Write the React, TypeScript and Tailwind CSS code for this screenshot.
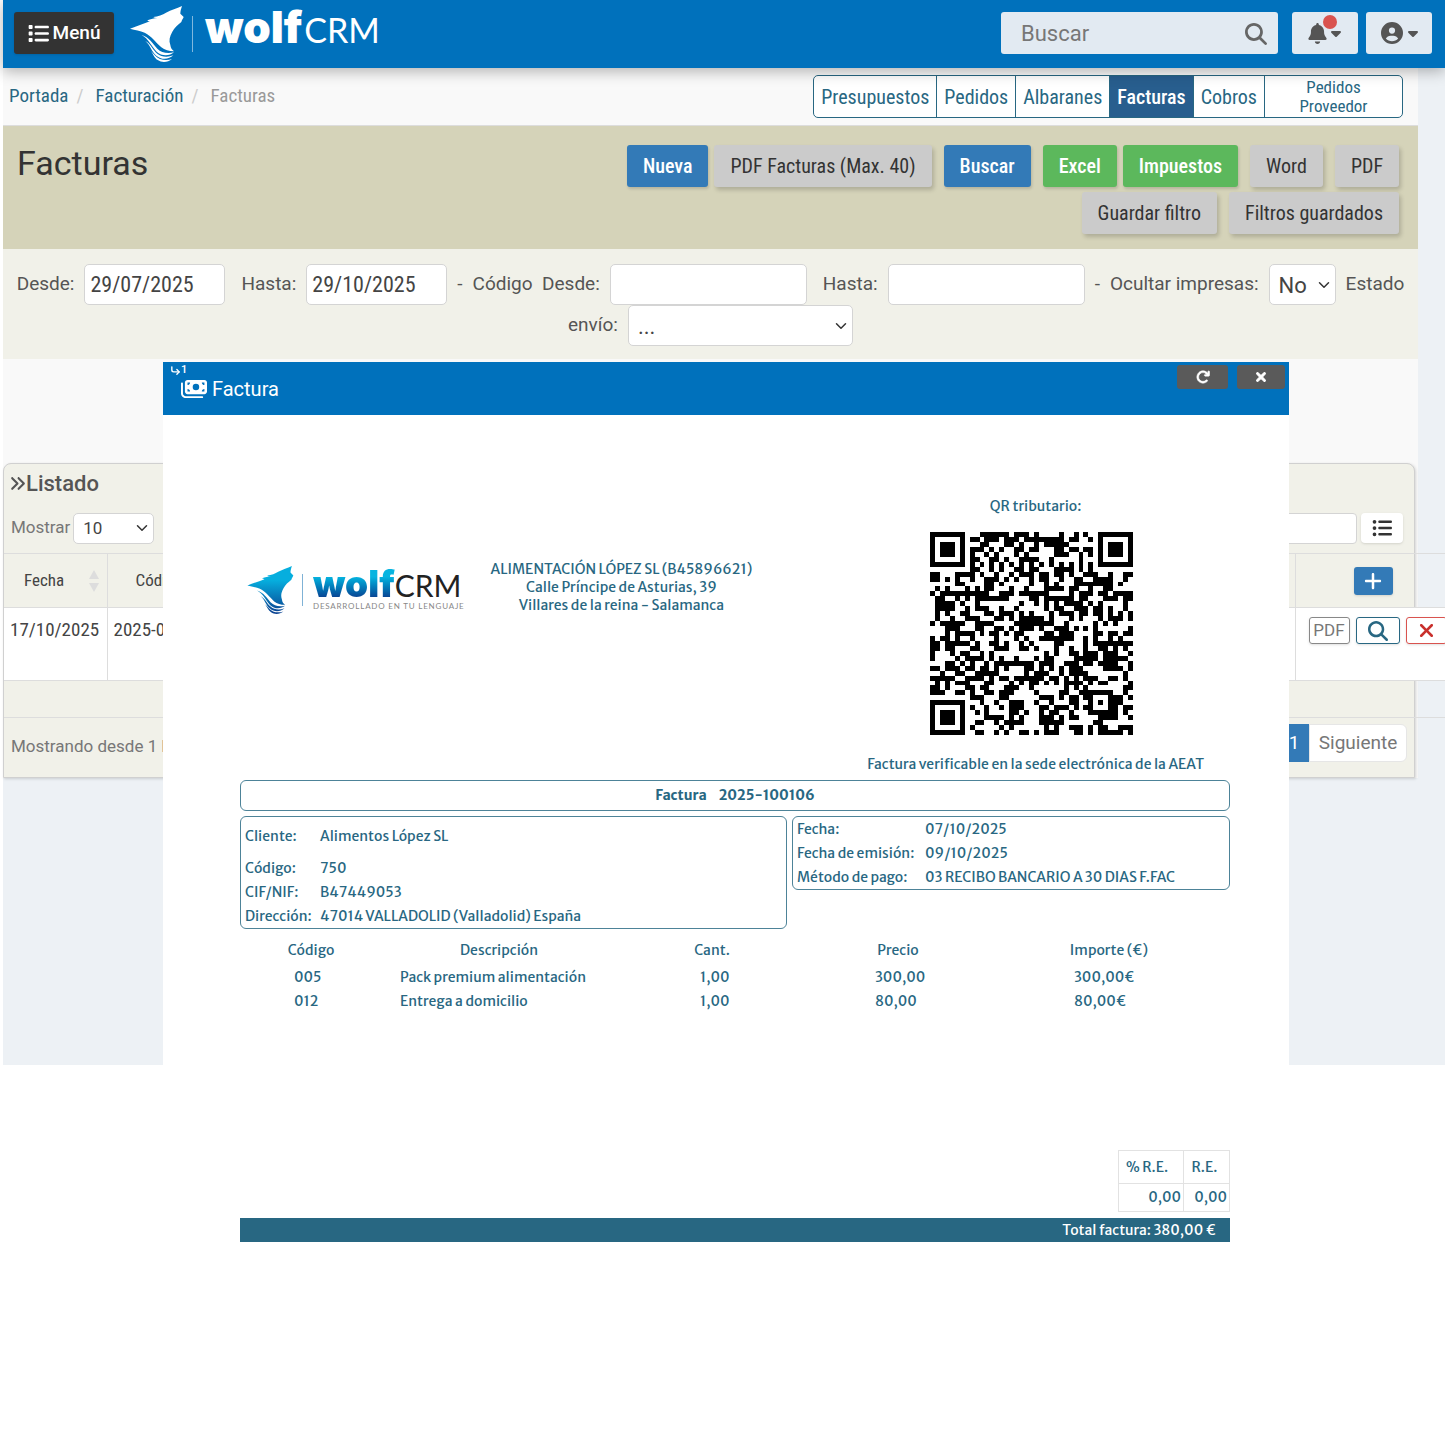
import * as React from "react"
import clsx from "clsx"
import {
    FaAnglesRight,
    FaArrowRotateRight,
    FaBell,
    FaCaretDown,
    FaCircleUser,
    FaList,
    FaListUl,
    FaMagnifyingGlass,
    FaMoneyBills,
    FaPlus,
    FaXmark,
} from "react-icons/fa6"
import { ChevronDown, CornerDownRight } from "lucide-react"

const tabs = ["Presupuestos", "Pedidos", "Albaranes", "Facturas", "Cobros"]

const items = [
    { code: "005", name: "Pack premium alimentación", qty: "1,00", price: "300,00", total: "300,00€" },
    { code: "012", name: "Entrega a domicilio", qty: "1,00", price: "80,00", total: "80,00€" },
]

const QR_SIZE = 41

// Finder squares, timing lines and alignment mark are fixed, the rest is a stable hash
function isDark(x: number, y: number) {
    const corners = [[0, 0], [QR_SIZE - 7, 0], [0, QR_SIZE - 7]]
    for (const [cx, cy] of corners) {
        const dx = Math.abs(x - cx - 3)
        const dy = Math.abs(y - cy - 3)
        const ring = Math.max(dx, dy)
        if (ring <= 4) return ring !== 2 && ring !== 4
    }
    const align = Math.max(Math.abs(x - 34), Math.abs(y - 34))
    if (align <= 2) return align !== 1
    if (y === 6) return x % 2 === 0
    if (x === 6) return y % 2 === 0
    let h = (x * 374761393 + y * 668265263) | 0
    h = Math.imul(h ^ (h >>> 13), 1274126177)
    return ((h ^ (h >>> 16)) & 15) < 8
}

function QrCode() {
    let d = ""
    for (let y = 0; y < QR_SIZE; y++) {
        for (let x = 0; x < QR_SIZE; x++) {
            if (isDark(x, y)) d += `M${x} ${y}h1v1h-1z`
        }
    }
    return (
        <svg viewBox="0 0 41 41" className="size-[203px]" shapeRendering="crispEdges" role="img" aria-label="QR">
            <path d={d} fill="#000" />
        </svg>
    )
}

function Wolf({ className, fill }: { className?: string; fill: string }) {
    return (
        <svg viewBox="0 0 162 168" className={className} aria-hidden="true">
            <defs>
                <linearGradient id="wolfFill" gradientUnits="userSpaceOnUse" x1="0" y1="0" x2="0" y2="168">
                    <stop offset="0.3" stopColor="#06aede" />
                    <stop offset="1" stopColor="#0b3f8f" />
                </linearGradient>
            </defs>
            <g fill={fill}>
                <path d="M156 0C153 9 151 16 151 23L161 33C159 38 156 42 154 48C143 57 133 65 127 77C119 91 116 104 121 117C122 126 126 131 132 136C117 136 104 132 94 124C78 110 66 91 44 80C31 73 15 73 0 68C20 61 40 53 60 46C55 46 54 45 52 43C62 39 73 37 83 36C76 36 72 35 70 33C84 32 98 26 108 20C124 12 140 7 156 0Z" />
                <path d="M34 86C58 94 68 112 82 128C94 140 112 144 132 139C118 151 94 151 80 137C64 120 56 98 34 86Z" />
                <path d="M46 105C64 115 68 132 82 143C94 153 112 155 130 148C116 161 94 162 79 149C64 137 62 118 46 105Z" />
                <path d="M62 134C72 144 78 154 90 159C102 163 114 163 126 159C114 169 96 171 83 162C72 155 70 144 62 134Z" />
            </g>
        </svg>
    )
}

function Tool({ tone = "gray", children }: { tone?: "gray" | "blue" | "green"; children: React.ReactNode }) {
    return (
        <button
            type="button"
            className={clsx(
                "h-[42px] rounded-[3px] px-4 text-xl whitespace-nowrap",
                tone === "gray" && "bg-[#cbcbcb] text-[#333] shadow-[2px_3px_4px_rgba(0,0,0,0.18)]",
                tone === "blue" && "bg-[#337ab7] font-medium text-white shadow-[1px_2px_3px_rgba(0,0,0,0.15)]",
                tone === "green" && "bg-[#5cb85c] font-medium text-white shadow-[1px_2px_3px_rgba(0,0,0,0.15)]",
            )}
        >
            {children}
        </button>
    )
}

const fieldClass = "h-[41px] rounded-[5px] border border-[#d4d4d4] bg-white text-[#444]"

function Select({ id, value, className, label }: { id: string; value: string; className: string; label?: string }) {
    return (
        <div className={clsx("relative", className)}>
            <select
                id={id}
                aria-label={label}
                defaultValue={value}
                className="size-full appearance-none rounded-[5px] border border-[#d4d4d4] bg-white pt-px pl-[9px] text-[#444]"
            >
                <option>{value}</option>
            </select>
            <ChevronDown size={18} strokeWidth={2} className="pointer-events-none absolute top-1/2 right-[3px] -translate-y-1/2 text-[#333]" />
        </div>
    )
}

function Header() {
    return (
        <header className="relative z-10 flex h-[68px] items-start bg-[#0071bc] pr-[13px] pl-[11px] shadow-[0_3px_14px_rgba(0,0,0,0.3)]">
            <button type="button" className="mt-3 flex h-[42px] w-[100px] items-center justify-center gap-1 rounded-[3px] bg-[#333] text-[19px] font-medium text-white shadow">
                <FaList size={21} /> Menú
            </button>
            <a href="#" aria-label="wolfCRM" className="ml-4 flex text-white">
                <Wolf className="mt-[6px] h-14 w-[54px]" fill="currentColor" />
                <span className="mt-4 ml-2 h-9 w-px bg-white/50" />
                <span className="ml-3 flex items-baseline gap-[2px] leading-[54px]">
                    <span className="font-[Inter] text-[44px] font-black">wolf</span>
                    <span className="font-[Lato] text-[34px]">CRM</span>
                </span>
            </a>
            <div className="mt-3 ml-auto flex items-center">
                <div className="relative h-[42px] w-[277px]">
                    <input type="search" aria-label="Buscar" placeholder="Buscar" className="size-full rounded-[3px] bg-[#e2eaf2] pl-5 text-[22px] text-[#555] placeholder:text-[#777]" />
                    <FaMagnifyingGlass size={22} className="absolute top-[11px] right-[11px] text-[#666]" />
                </div>
                <button type="button" aria-label="Avisos" className="relative ml-[14px] flex h-[42px] w-[66px] items-center justify-center rounded-[3px] bg-[#e2eaf2] text-[#555]">
                    <FaBell size={21} />
                    <FaCaretDown size={16} />
                    <span className="absolute top-[3px] left-[31px] size-[14px] rounded-full bg-[#d9534f]" />
                </button>
                <button type="button" aria-label="Usuario" className="ml-2 flex h-[42px] w-[66px] items-center justify-center gap-[2px] rounded-[3px] bg-[#e2eaf2] pl-1 text-[#555]">
                    <FaCircleUser size={22} />
                    <FaCaretDown size={16} />
                </button>
            </div>
        </header>
    )
}

function Filters() {
    return (
        <form className="h-[110px] bg-[#f1f1e9] pt-[15px] text-[19px] text-[#555]">
            <div className="flex items-center justify-center whitespace-nowrap">
                <label htmlFor="desde">Desde:</label>
                <input id="desde" defaultValue="29/07/2025" className={clsx(fieldClass, "ml-[10px] w-[141px] pl-[5px] font-['Roboto_Condensed'] text-[22px]")} />
                <label htmlFor="hasta" className="ml-4">Hasta:</label>
                <input id="hasta" defaultValue="29/10/2025" className={clsx(fieldClass, "ml-[10px] w-[141px] pl-[5px] font-['Roboto_Condensed'] text-[22px]")} />
                <span className="ml-[10px]">-</span>
                <label htmlFor="codDesde" className="ml-[10px]">Código&nbsp; Desde:</label>
                <input id="codDesde" className={clsx(fieldClass, "ml-[10px] w-[197px]")} />
                <label htmlFor="codHasta" className="ml-4">Hasta:</label>
                <input id="codHasta" className={clsx(fieldClass, "ml-[10px] w-[197px]")} />
                <span className="ml-[10px]">-</span>
                <label htmlFor="ocultar" className="ml-[10px]">Ocultar impresas:</label>
                <Select id="ocultar" value="No" className="ml-[10px] h-[41px] w-[67px] text-[22px]" />
                <label htmlFor="envio" className="ml-[10px]">Estado</label>
            </div>
            <div className="flex items-center justify-center">
                <label htmlFor="envio">envío:</label>
                <Select id="envio" value="..." className="ml-[10px] h-[41px] w-[225px] text-[22px]" />
            </div>
        </form>
    )
}

function Listing() {
    return (
        <section className="mr-[3px] h-[315px] rounded-t-lg border border-[#d0d0d0] bg-[#f1f1e9] shadow-[1px_1px_3px_rgba(0,0,0,0.15)]">
            <h2 className="flex h-[39px] items-center pl-[5px] text-[22px] font-medium text-[#555]">
                <FaAnglesRight size={17} /> Listado
            </h2>
            <div className="flex h-[50px] items-center pr-[11px] pl-[7px] text-[17px] text-[#777]">
                <label htmlFor="mostrar">Mostrar</label>
                <Select id="mostrar" value="10" className="ml-[3px] h-[31px] w-[81px]" />
                <input type="search" aria-label="Filtrar" className="ml-auto h-[31px] w-60 rounded-[4px] border border-[#d4d4d4] bg-white" />
                <button type="button" aria-label="Columnas" className="ml-1 flex h-[30px] w-[42px] items-center justify-center rounded-[4px] bg-white text-[#333] shadow-sm">
                    <FaListUl size={20} />
                </button>
            </div>
            <table className="w-[1491px] table-fixed border-collapse text-left font-['Roboto_Condensed'] text-[#444]">
                <colgroup>
                    <col className="w-[103px]" />
                    <col className="w-[120px]" />
                    <col />
                    <col className="w-[200px]" />
                </colgroup>
                <thead>
                    <tr className="h-[54px] border-y border-[#ddd] text-[17px]">
                        <th className="border-r border-[#ddd] font-normal">
                            <div className="flex items-center justify-between pr-2 pl-5">
                                Fecha
                                <svg viewBox="0 0 10 22" className="h-[22px] w-[10px]" fill="#ddd">
                                    <path d="M5 0l5 9H0zM5 22l5-9H0z" />
                                </svg>
                            </div>
                        </th>
                        <th className="pl-7 font-normal">Código</th>
                        <th className="border-r border-[#ddd]" />
                        <th className="pl-[58px]">
                            <button type="button" aria-label="Añadir" className="flex h-7 w-[39px] items-center justify-center rounded-[3px] bg-[#337ab7] text-white shadow">
                                <FaPlus size={20} />
                            </button>
                        </th>
                    </tr>
                </thead>
                <tbody>
                    <tr className="h-[73px] border-b border-[#ddd] bg-white align-top text-[19px]">
                        <td className="border-r border-[#ddd] pt-2 pl-[6px]">17/10/2025</td>
                        <td className="pt-2 pl-[6px]">2025-000106</td>
                        <td className="border-r border-[#ddd]" />
                        <td className="pt-[9px] pl-[13px]">
                            <div className="flex gap-[6px] font-[Roboto] text-[17px]">
                                <button type="button" className="h-[27px] w-[41px] rounded-[3px] border border-[#888] text-[#777] shadow">PDF</button>
                                <button type="button" aria-label="Ver" className="flex h-[27px] w-11 items-center justify-center rounded-[3px] border border-[#286782] text-[#286782] shadow">
                                    <FaMagnifyingGlass size={20} />
                                </button>
                                <button type="button" aria-label="Borrar" className="flex h-[27px] w-[41px] items-center justify-center rounded-[3px] border border-[#d9534f] text-[#c9302c] shadow">
                                    <FaXmark size={21} />
                                </button>
                            </div>
                        </td>
                    </tr>
                </tbody>
                <tfoot>
                    <tr className="h-[37px] border-b border-[#ddd]">
                        <td colSpan={4} />
                    </tr>
                </tfoot>
            </table>
            <div className="flex h-[58px] items-center justify-between pr-[7px] pl-[7px] text-[17px] text-[#777]">
                <span>Mostrando desde 1 hasta 1</span>
                <div className="mb-2 flex h-[38px] text-[19px]">
                    <button type="button" className="w-[30px] bg-[#337ab7] text-white">1</button>
                    <button type="button" className="w-[98px] rounded-r-md border border-[#e6e6e6] bg-white">Siguiente</button>
                </div>
            </div>
        </section>
    )
}

function InvoiceModal() {
    return (
        <div role="dialog" aria-label="Factura" className="absolute top-[362px] right-[156px] left-40 bg-white">
            <div className="flex h-[53px] justify-between bg-[#0071bc] pr-1 pl-[7px] text-white">
                <div className="pt-[2px]">
                    <div className="flex items-center text-[11px] leading-3 font-medium">
                        <CornerDownRight size={11} strokeWidth={3} /> 1
                    </div>
                    <h2 className="flex items-center gap-[5px] pl-[11px] text-xl leading-6">
                        <FaMoneyBills size={26} /> Factura
                    </h2>
                </div>
                <div className="mt-[3px] flex h-6 gap-[9px]">
                    <button type="button" aria-label="Recargar" className="flex w-[51px] items-center justify-center rounded-[3px] bg-[#5a5a5a]">
                        <FaArrowRotateRight size={14} strokeWidth={20} stroke="currentColor" />
                    </button>
                    <button type="button" aria-label="Cerrar" className="flex w-12 items-center justify-center rounded-[3px] bg-[#5a5a5a]">
                        <FaXmark size={14} strokeWidth={40} stroke="currentColor" />
                    </button>
                </div>
            </div>

            <div className="pt-[82px] pr-[59px] pb-48 pl-[77px] font-['Merriweather_Sans','Open_Sans',sans-serif] text-[14px] text-[#286782]">
                <div className="flex">
                    <div className="mt-[69px] ml-[7px] flex h-[52px]">
                        <Wolf className="h-12 w-[47px]" fill="url(#wolfFill)" />
                        <span className="mt-2 ml-2 h-8 w-px bg-[#7fb2d6]" />
                        <div className="ml-[10px] font-[Lato]">
                            <div className="flex h-[34px] items-baseline leading-9 text-[#222]">
                                <span className="bg-linear-to-b from-[#06b4e0] from-30% to-[#0b3f8f] to-90% bg-clip-text font-[Inter] text-[37px] font-black text-transparent">wolf</span>
                                <span className="text-[30px]">CRM</span>
                            </div>
                            <p className="text-[8px] leading-3 tracking-widest whitespace-nowrap text-[#888]">DESARROLLADO EN TU LENGUAJE</p>
                        </div>
                    </div>
                    <p className="mt-[63px] ml-[26px] text-center leading-[18px] whitespace-nowrap">
                        ALIMENTACIÓN LÓPEZ SL (B45896621)
                        <br />
                        Calle Príncipe de Asturias, 39
                        <br />
                        Villares de la reina - Salamanca
                    </p>
                    <div className="mr-[26px] ml-auto flex flex-col items-center leading-[18px] whitespace-nowrap">
                        <p>QR tributario:</p>
                        <div className="pt-[17px] pr-2 pb-5">
                            <QrCode />
                        </div>
                        <p>Factura verificable en la sede electrónica de la AEAT</p>
                    </div>
                </div>

                <h3 className="mt-[7px] flex h-[31px] items-center justify-center gap-3 rounded-md border border-[#4d8398] text-[14px] font-semibold">
                    <span>Factura</span>
                    <span>2025-100106</span>
                </h3>

                <div className="mt-[5px] flex items-start gap-[5px] leading-6">
                    <dl className="grid h-[113px] w-[547px] grid-cols-[75px_1fr] content-start rounded-md border border-[#4d8398] pt-[7px] pl-1">
                        <dt className="mb-2">Cliente:</dt>
                        <dd>Alimentos López SL</dd>
                        <dt>Código:</dt>
                        <dd>750</dd>
                        <dt>CIF/NIF:</dt>
                        <dd>B47449053</dd>
                        <dt>Dirección:</dt>
                        <dd>47014 VALLADOLID (Valladolid) España</dd>
                    </dl>
                    <dl className="grid flex-1 grid-cols-[128px_1fr] rounded-md border border-[#4d8398] pl-1 whitespace-nowrap">
                        <dt>Fecha:</dt>
                        <dd>07/10/2025</dd>
                        <dt>Fecha de emisión:</dt>
                        <dd>09/10/2025</dd>
                        <dt>Método de pago:</dt>
                        <dd>03 RECIBO BANCARIO A 30 DIAS F.FAC</dd>
                    </dl>
                </div>

                <table className="mt-[6px] w-full table-fixed text-left">
                    <colgroup>
                        <col className="w-[142px]" />
                        <col className="w-[234px]" />
                        <col className="w-[192px]" />
                        <col className="w-[180px]" />
                        <col />
                    </colgroup>
                    <thead>
                        <tr className="h-[30px] text-center">
                            <th className="font-normal">Código</th>
                            <th className="font-normal">Descripción</th>
                            <th className="font-normal">Cant.</th>
                            <th className="font-normal">Precio</th>
                            <th className="font-normal">Importe (€)</th>
                        </tr>
                    </thead>
                    <tbody>
                        {items.map((item) => (
                            <tr key={item.code} className="h-6">
                                <td className="pl-[54px]">{item.code}</td>
                                <td className="pl-[18px]">{item.name}</td>
                                <td className="pl-[84px]">{item.qty}</td>
                                <td className="pl-[67px]">{item.price}</td>
                                <td className="pl-[86px]">{item.total}</td>
                            </tr>
                        ))}
                    </tbody>
                </table>

                <table className="mt-[137px] ml-auto border-collapse">
                    <thead>
                        <tr className="h-[33px]">
                            <th className="w-[65px] border border-[#e2e2e2] pr-2 text-center font-normal">% R.E.</th>
                            <th className="w-[46px] border border-[#e2e2e2] pr-1 text-center font-normal">R.E.</th>
                        </tr>
                    </thead>
                    <tbody>
                        <tr className="h-7 text-right">
                            <td className="border border-[#e2e2e2] pr-[2px]">0,00</td>
                            <td className="border border-[#e2e2e2] pr-[2px]">0,00</td>
                        </tr>
                    </tbody>
                </table>
                <p className="mt-[6px] h-6 bg-[#286782] pr-[14px] text-right leading-6 text-white">Total factura: 380,00 €</p>
            </div>
        </div>
    )
}

export default function App() {
    return (
        <div className="min-h-screen overflow-hidden bg-white pl-[3px] font-[Roboto,sans-serif]">
            <div className="relative">
                <div className="h-[1065px] bg-[#edf1f5]">
                    <Header />
                    <main className="mr-[27px] bg-[#f9f9f9]">
                        <div className="flex h-[58px] items-center justify-between border-b border-[#ddd] pr-[15px] pl-[6px] font-['Roboto_Condensed'] text-[19px] text-[#286782]">
                            <nav className="flex gap-2">
                                <a href="#">Portada</a>
                                <span className="text-[#ccc]">/</span>
                                <a href="#" className="ml-1">Facturación</a>
                                <span className="text-[#ccc]">/</span>
                                <span className="ml-1 text-[#999]">Facturas</span>
                            </nav>
                            <nav className="flex h-[43px] divide-x divide-[#286782] overflow-hidden rounded-[5px] border border-[#286782] bg-white text-xl">
                                {tabs.map((tab) => (
                                    <a
                                        key={tab}
                                        href="#"
                                        className={clsx("flex items-center px-[7px]", tab === "Facturas" && "bg-[#285e8e] font-medium text-white")}
                                    >
                                        {tab}
                                    </a>
                                ))}
                                <a href="#" className="flex w-[137px] items-center justify-center px-8 text-center text-[17px] leading-[19px]">
                                    Pedidos Proveedor
                                </a>
                            </nav>
                        </div>
                        <div className="flex h-[123px] justify-between bg-[#d5d3b9] pt-[19px] pr-[19px] pl-[14px]">
                            <h1 className="text-[34px] leading-9 text-[#333]">Facturas</h1>
                            <div className="flex flex-col items-end gap-[5px] font-['Roboto_Condensed']">
                                <div className="flex gap-3">
                                    <div className="flex gap-[6px]">
                                        <Tool tone="blue">Nueva</Tool>
                                        <Tool>PDF Facturas (Max. 40)</Tool>
                                    </div>
                                    <Tool tone="blue">Buscar</Tool>
                                    <div className="flex gap-[6px]">
                                        <Tool tone="green">Excel</Tool>
                                        <Tool tone="green">Impuestos</Tool>
                                    </div>
                                    <Tool>Word</Tool>
                                    <Tool>PDF</Tool>
                                </div>
                                <div className="flex gap-3">
                                    <Tool>Guardar filtro</Tool>
                                    <Tool>Filtros guardados</Tool>
                                </div>
                            </div>
                        </div>
                        <Filters />
                        <div className="h-[104px]" />
                        <Listing />
                    </main>
                </div>
                <InvoiceModal />
            </div>
        </div>
    )
}
